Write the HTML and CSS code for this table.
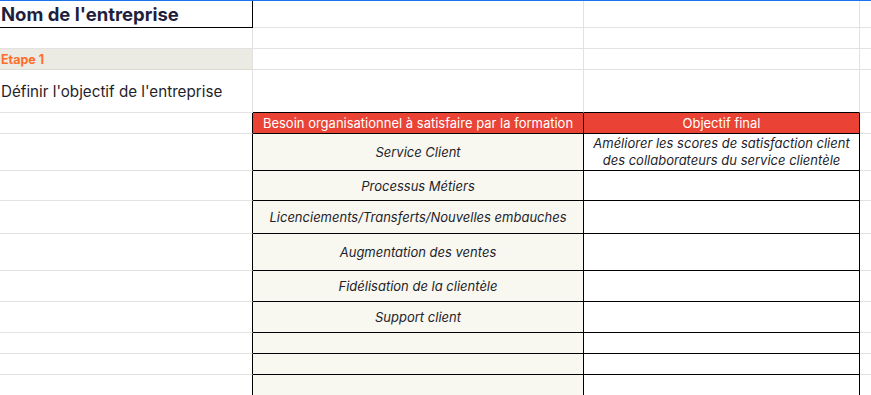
FILE: index.html
```html
<!DOCTYPE html>
<html lang="fr">
<head>
<meta charset="utf-8">
<title>Feuille</title>
<link rel="stylesheet" href="styles.css">
</head>
<body>
<div class="topbar"></div>
<div class="sheet">
  <div class="cell r1 a title-cell"><span class="title">Nom de l'entreprise</span></div>
  <div class="cell r1"></div>
  <div class="cell r1"></div>
  <div class="cell r1 d"></div>

  <div class="cell r2"></div>
  <div class="cell r2"></div>
  <div class="cell r2"></div>
  <div class="cell r2 d"></div>

  <div class="cell r3 step">Etape 1</div>
  <div class="cell r3"></div>
  <div class="cell r3"></div>
  <div class="cell r3 d"></div>

  <div class="cell r4 goal">Définir l'objectif de l'entreprise</div>
  <div class="cell r4 tb"></div>
  <div class="cell r4 tb"></div>
  <div class="cell r4 d"></div>

  <div class="cell r5 la"></div>
  <div class="cell r5 head">Besoin organisationnel à satisfaire par la formation</div>
  <div class="cell r5 head">Objectif final</div>
  <div class="cell r5 d"></div>

  <div class="cell r6 la"></div>
  <div class="cell r6 need">Service Client</div>
  <div class="cell r6 obj">Améliorer les scores de satisfaction client des collaborateurs du service clientèle</div>
  <div class="cell r6 d"></div>

  <div class="cell r7 la"></div>
  <div class="cell r7 need">Processus Métiers</div>
  <div class="cell r7 obj"></div>
  <div class="cell r7 d"></div>

  <div class="cell r8 la"></div>
  <div class="cell r8 need">Licenciements/Transferts/Nouvelles embauches</div>
  <div class="cell r8 obj"></div>
  <div class="cell r8 d"></div>

  <div class="cell r9 la"></div>
  <div class="cell r9 need">Augmentation des ventes</div>
  <div class="cell r9 obj"></div>
  <div class="cell r9 d"></div>

  <div class="cell r10 la"></div>
  <div class="cell r10 need">Fidélisation de la clientèle</div>
  <div class="cell r10 obj"></div>
  <div class="cell r10 d"></div>

  <div class="cell r11 la"></div>
  <div class="cell r11 need">Support client</div>
  <div class="cell r11 obj"></div>
  <div class="cell r11 d"></div>

  <div class="cell r12 la"></div>
  <div class="cell r12 need"></div>
  <div class="cell r12 obj"></div>
  <div class="cell r12 d"></div>

  <div class="cell r13 la"></div>
  <div class="cell r13 need"></div>
  <div class="cell r13 obj"></div>
  <div class="cell r13 d"></div>

  <div class="cell r14 la"></div>
  <div class="cell r14 need"></div>
  <div class="cell r14 obj"></div>
  <div class="cell r14 d"></div>
</div>
</body>
</html>
```

FILE: styles.css
```css
html, body {
  margin: 0;
  padding: 0;
  background: #ffffff;
  overflow: hidden;
}

body {
  font-family: "Inter", "Roboto", sans-serif;
  color: #1f1f2b;
}

.topbar {
  height: 1px;
  background: #1a73e8;
}

.sheet {
  display: grid;
  grid-template-columns: 253px 331px 276px 20px;
  grid-template-rows: 27px 21px 21px 43px 21px 37px 30px 33px 37px 31px 31px 21px 21px 30px;
}

.cell {
  box-sizing: border-box;
  border-right: 1px solid #e2e2e2;
  border-bottom: 1px solid #e2e2e2;
  display: flex;
  align-items: center;
  overflow: hidden;
  white-space: nowrap;
}

.cell.d {
  border-right: none;
}

.title-cell {
  border-right-color: #000;
  border-bottom-color: #000;
  padding-left: 1px;
}

.title {
  font-weight: 700;
  font-size: 18.5px;
  color: #1f1f3d;
}

.step {
  background: #ebeae3;
  color: #ff6d2b;
  font-weight: 700;
  font-size: 12.5px;
  padding-left: 1px;
  border-bottom-color: #dcdbd4;
}

.goal {
  font-size: 15.2px;
  color: #1f1f2b;
  padding-left: 1px;
}

.tb {
  border-bottom-color: #000;
}

.la {
  border-right-color: #000;
}

.head {
  background: #ea4335;
  color: #ffffff;
  font-size: 13px;
  justify-content: center;
  border-right-color: #000;
  border-bottom-color: #000;
}

.need {
  background: #f8f7f0;
  font-style: italic;
  font-size: 13px;
  justify-content: center;
  border-right-color: #000;
  border-bottom-color: #000;
}

.obj {
  background: #ffffff;
  font-style: italic;
  font-size: 13px;
  justify-content: center;
  text-align: center;
  white-space: normal;
  line-height: 17px;
  padding: 0 4px;
  border-right-color: #000;
  border-bottom-color: #000;
}
```
